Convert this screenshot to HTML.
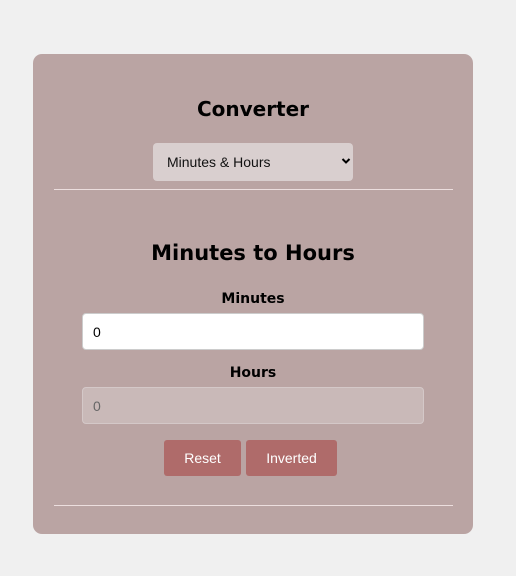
<!DOCTYPE html>
<html><head><style>
body{margin:0;background:#f0f0f0;width:516px;height:576px;position:relative;font-family:"Liberation Sans",sans-serif;overflow:hidden}
.card{position:absolute;left:33px;top:54px;width:440px;height:480px;background:#baa4a3;border-radius:9px}
.abs{position:absolute}
h1,h2,h3{margin:0;position:absolute;left:0;right:0;text-align:center;font-family:"DejaVu Sans","Liberation Sans",sans-serif;font-weight:bold;color:#000}
.hr{position:absolute;left:21px;width:399px;height:1px;background:#ecdede}
.inp{position:absolute;left:49px;width:342px;height:37px;border-radius:4px;box-sizing:border-box;font-size:14px;padding-left:10px;line-height:37px}
.btn{position:absolute;top:386px;height:36px;background:#af6b6a;color:#fff;border-radius:3px;font-size:14px;text-align:center;line-height:36px}
</style></head><body>
<div class="card">
<h1 style="top:43px;font-size:20px">Converter</h1>
<div class="abs" style="left:120px;top:89px;width:200px;height:38px;background:#d9cfcf;border-radius:4px;font-size:14px;line-height:38px;padding-left:14px;box-sizing:border-box;color:#111">Minutes &amp; Hours
<svg class="abs" style="right:2px;top:14px" width="10" height="8" viewBox="0 0 10 8"><path d="M1.5 2L5 5.5 8.5 2" stroke="#000" stroke-width="2" fill="none"/></svg></div>
<div class="hr" style="top:135px"></div>
<h2 style="top:187px;font-size:21px">Minutes to Hours</h2>
<h3 style="top:237px;font-size:14px">Minutes</h3>
<div class="inp" style="top:259px;background:#fff;border:1px solid #ccc;color:#000">0</div>
<h3 style="top:311px;font-size:14px">Hours</h3>
<div class="inp" style="top:333px;background:#c9b9b8;border:1px solid #d4c8c8;color:#666">0</div>
<div class="btn" style="left:131px;width:77px">Reset</div>
<div class="btn" style="left:213px;width:91px">Inverted</div>
<div class="hr" style="top:451px"></div>
</div>
</body></html>
